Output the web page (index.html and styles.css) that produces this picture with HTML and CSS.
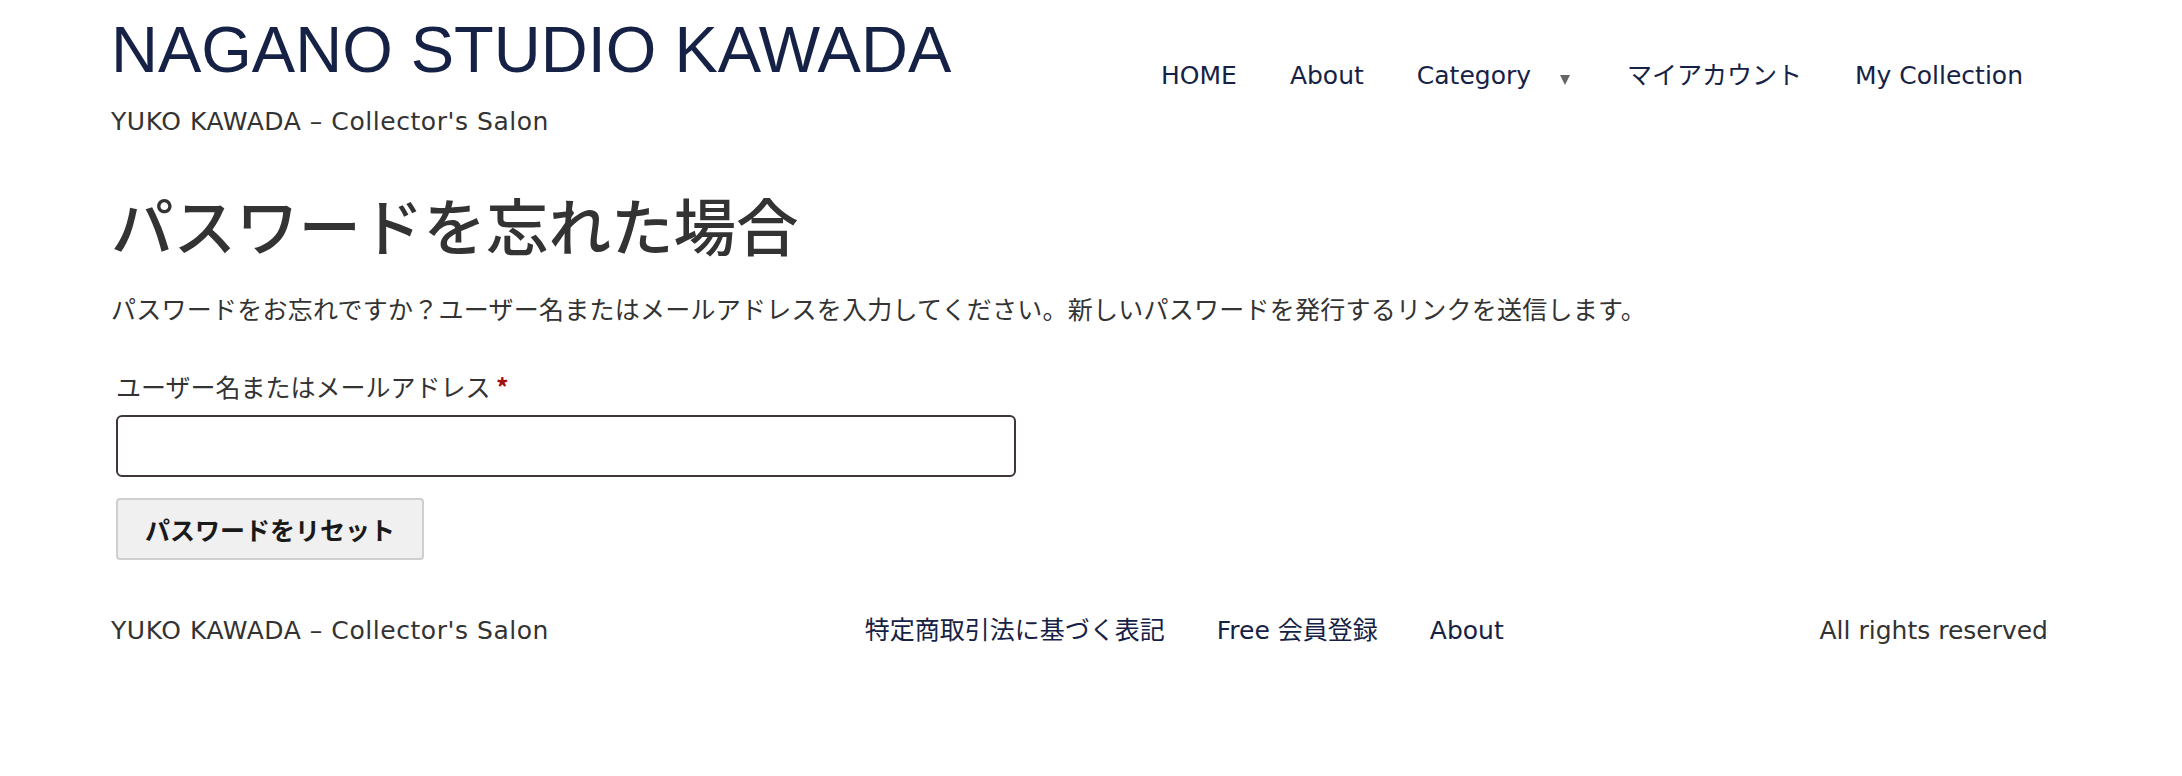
FILE: index.html
```html
<!DOCTYPE html>
<html lang="ja">
<head>
<meta charset="utf-8">
<title>パスワードを忘れた場合 – NAGANO STUDIO KAWADA</title>
<link rel="stylesheet" href="styles.css">
</head>
<body>
<header class="site-header">
  <div class="brand">
    <p class="site-title"><a href="#">NAGANO STUDIO KAWADA</a></p>
    <p class="site-tagline">YUKO KAWADA – Collector's Salon</p>
  </div>
  <nav class="main-nav">
    <ul class="nav-list">
      <li><a href="#">HOME</a></li>
      <li><a href="#">About</a></li>
      <li class="has-sub"><a href="#">Category</a><span class="caret"></span></li>
      <li><a href="#">マイアカウント</a></li>
      <li><a href="#">My Collection</a></li>
    </ul>
  </nav>
</header>
<main class="content">
  <h1 class="page-title">パスワードを忘れた場合</h1>
  <p class="intro">パスワードをお忘れですか？ユーザー名またはメールアドレスを入力してください。新しいパスワードを発行するリンクを送信します。</p>
  <form class="lost-form">
    <label class="field-label" for="user_login">ユーザー名またはメールアドレス <span class="req">*</span></label>
    <input class="text-input" id="user_login" type="text">
    <button class="reset-btn" type="button">パスワードをリセット</button>
  </form>
</main>
<footer class="site-footer">
  <div class="foot-left">YUKO KAWADA – Collector's Salon</div>
  <ul class="foot-links">
    <li><a href="#">特定商取引法に基づく表記</a></li>
    <li><a href="#">Free 会員登録</a></li>
    <li><a href="#">About</a></li>
  </ul>
  <div class="foot-right">All rights reserved</div>
</footer>
</body>
</html>
```
FILE: styles.css
```css
* { box-sizing: border-box; }
html, body { margin: 0; padding: 0; background: #fff; }
body {
  font-family: "DejaVu Sans", "Noto Sans CJK JP", sans-serif;
  font-size: 25px;
  color: #333;
}
a { text-decoration: none; color: inherit; }
ul { list-style: none; margin: 0; padding: 0; }

.site-header {
  display: flex;
  justify-content: space-between;
  align-items: flex-start;
  padding: 17px 134px 0 111px;
}
.site-title {
  margin: 0;
  font-family: "Liberation Sans", Arial, sans-serif;
  font-size: 65px;
  line-height: 1;
  color: #162245;
}
.site-tagline {
  margin: 24px 0 0;
  font-size: 25px;
  letter-spacing: 0.55px;
  line-height: 1.3;
  color: #333;
}
.main-nav { padding-top: 44px; }
.nav-list {
  display: flex;
  align-items: center;
  gap: 53px;
  padding-right: 25px;
  color: #162245;
  line-height: 1.2;
}
.has-sub { display: flex; align-items: center; gap: 29px; padding-right: 4px; }
.caret {
  width: 0; height: 0;
  border-left: 5.5px solid transparent;
  border-right: 5.5px solid transparent;
  border-top: 10px solid #666;
  margin-top: 8px;
}

.content { padding: 0 134px 0 111px; }
.page-title {
  margin: 44px 0 0;
  font-family: "Noto Sans CJK JP", sans-serif;
  font-size: 62.5px;
  font-weight: 500;
  line-height: 1.3;
  color: #333;
}
.intro {
  margin: 26px 0 0;
  font-family: "Noto Sans CJK JP", sans-serif;
  letter-spacing: 0.25px;
  line-height: 1.5;
}
.lost-form {
  display: flex;
  flex-direction: column;
  align-items: flex-start;
  padding-left: 5px;
  margin-top: 41px;
}
.field-label {
  font-family: "Noto Sans CJK JP", sans-serif;
  line-height: 1.5;
  color: #333;
}
.req { color: #a1120f; font-weight: 700; }
.text-input {
  margin-top: 9px;
  width: 900px;
  height: 62px;
  border: 2px solid #3f3636;
  border-radius: 6px;
  background: #fff;
  font-size: 25px;
  padding: 0 14px;
}
.reset-btn {
  margin-top: 21px;
  width: 308px;
  height: 62px;
  border: 2px solid #cfcfcf;
  border-radius: 4px;
  background: #f0f0f0;
  font-family: "Noto Sans CJK JP", sans-serif;
  font-size: 25px;
  font-weight: 700;
  color: #1a1a1a;
}

.site-footer {
  display: flex;
  justify-content: space-between;
  align-items: center;
  padding: 52px 134px 0 111px;
  line-height: 1.5;
}
.foot-left { letter-spacing: 0.55px; }
.foot-links {
  display: flex;
  gap: 52px;
  color: #162245;
}
.foot-right { color: #333; }
```
